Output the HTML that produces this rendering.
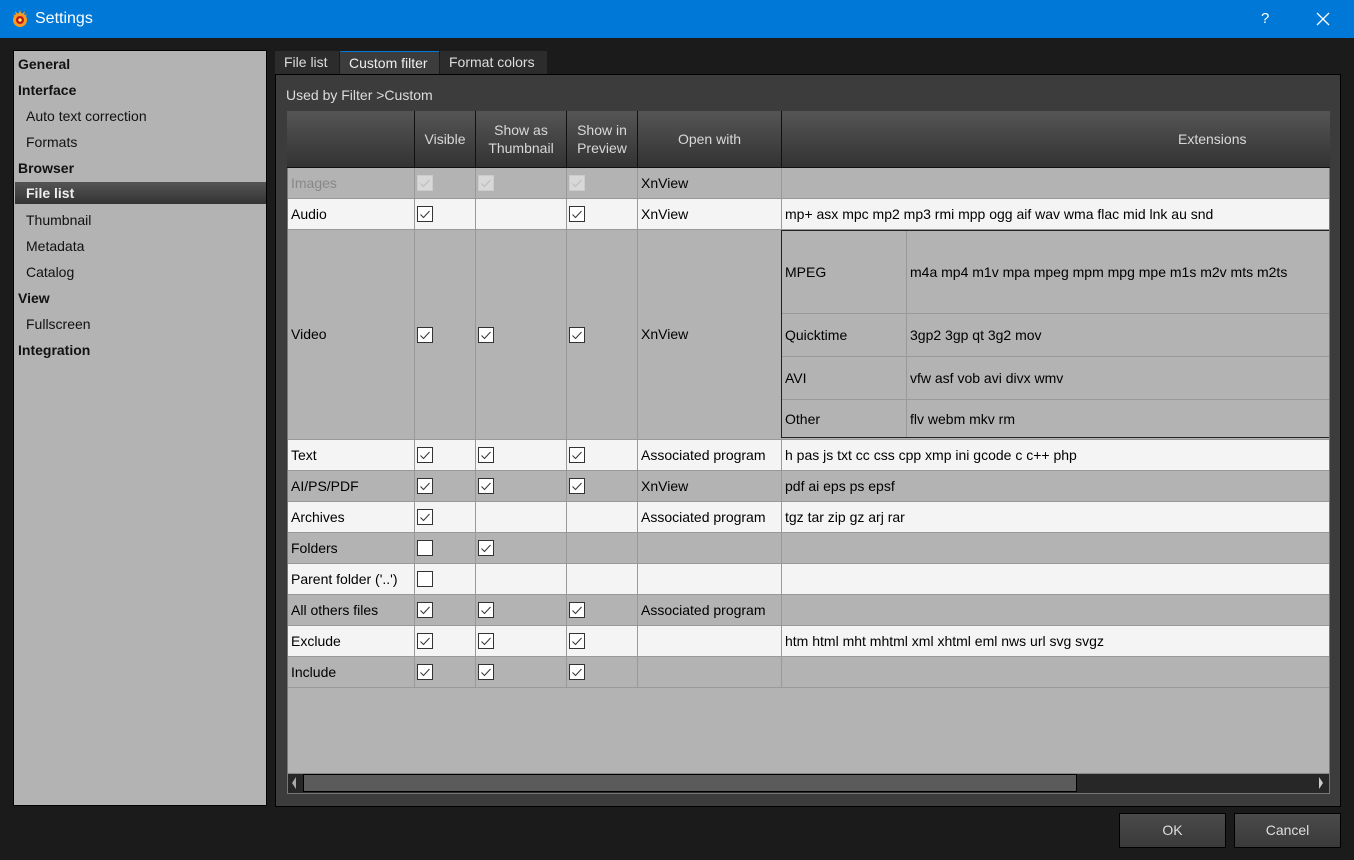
<!DOCTYPE html>
<html><head><meta charset="utf-8"><style>
*{margin:0;padding:0;box-sizing:border-box}
body{width:1354px;height:860px;background:#1b1b1b;font-family:"Liberation Sans",sans-serif;font-size:14px;position:relative;overflow:hidden;color:#000}
.a{position:absolute}
.title{left:0;top:0;width:1354px;height:38px;background:#0078d7;color:#fff;font-size:15px}
.nav{left:13px;top:50px;width:254px;height:756px;background:#b3b3b3;border:1px solid #000}
.nav div{position:absolute;left:4px;font-weight:bold;color:#111;height:22px;line-height:22px;width:248px}
.nav .s{padding-left:8px;font-weight:normal}
.tab{top:51px;height:23px;line-height:23px;color:#ddd;background:#2c2c2c;padding:0 9px;font-size:14px}
.panel{left:275px;top:74px;width:1066px;height:733px;background:#3c3c3c;border:1px solid #000}
.grid{left:287px;top:111px;width:1043px;height:683px;background:#b3b3b3;border:1px solid #777}
.hdr{left:287px;top:111px;width:1043px;height:57px;background:linear-gradient(#555,#333);border-bottom:1px solid #111}
.hc{position:absolute;top:0;height:56px;border-left:1px solid #111;color:#d8d8d8;display:flex;align-items:center;justify-content:center;text-align:center;line-height:18px}
.row{position:absolute;left:288px;width:1041px;height:31px;border-bottom:1px solid #999}
.c{position:absolute;top:0;height:30px;line-height:30px;padding-left:3px;border-right:1px solid #999;white-space:nowrap}
.cb{position:absolute;top:8px;width:16px;height:16px;border:1px solid #333;background:#fff}
.cb svg{position:absolute;left:2px;top:3px}
.dis{border-color:#ccc;background:#d8d8d8}
.btn{top:813px;height:35px;background:linear-gradient(#4a4a4a,#3a3a3a);border:1px solid #000;color:#ddd;text-align:center;line-height:33px;font-size:14px}
</style></head><body>
<div class="a title">
 <svg class="a" style="left:10px;top:9px" width="20" height="20" viewBox="0 0 20 20"><g fill="#f59a23"><circle cx="10" cy="11" r="7"/><path d="M3 5l3 2-1 2zM17 5l-3 2 1 2zM10 1l1.5 4h-3zM5 2l3 3-2 1zM15 2l-3 3 2 1z"/></g><circle cx="10" cy="11" r="4" fill="#c0161b"/><circle cx="10" cy="11" r="1.6" fill="#ff6"/></svg>
 <div class="a" style="left:35px;top:10px;font-size:16px">Settings</div>
 <div class="a" style="left:1261px;top:10px;font-size:15px">?</div>
 <svg class="a" style="left:1316px;top:12px" width="14" height="14"><path d="M1 1L13 13M13 1L1 13" stroke="#fff" stroke-width="1.3"/></svg>
</div>
<div class="a nav">
 <div style="top:2px">General</div>
 <div style="top:28px">Interface</div>
 <div class="s" style="top:54px">Auto text correction</div>
 <div class="s" style="top:80px">Formats</div>
 <div style="top:106px">Browser</div>
 <div class="s" style="top:131px;background:linear-gradient(#555,#333);color:#eee;font-weight:bold;left:1px;padding-left:11px;width:251px">File list</div>
 <div class="s" style="top:158px">Thumbnail</div>
 <div class="s" style="top:184px">Metadata</div>
 <div class="s" style="top:210px">Catalog</div>
 <div style="top:236px">View</div>
 <div class="s" style="top:262px">Fullscreen</div>
 <div style="top:288px">Integration</div>
</div>
<div class="a panel"></div>
<div class="a tab" style="left:275px;width:64px">File list</div>
<div class="a tab" style="left:340px;width:99px;background:#3c3c3c;border-top:1px solid #0078d7;color:#eee">Custom filter</div>
<div class="a tab" style="left:440px;width:107px">Format colors</div>
<div class="a" style="left:286px;top:87px;color:#ddd">Used by Filter &gt;Custom</div>
<div class="a grid"></div>
<div class="a hdr">
 <div class="hc" style="left:127px;width:61px">Visible</div>
 <div class="hc" style="left:188px;width:91px">Show as<br>Thumbnail</div>
 <div class="hc" style="left:279px;width:71px">Show in<br>Preview</div>
 <div class="hc" style="left:350px;width:144px">Open with</div>
 <div class="hc" style="left:494px;width:547px;justify-content:flex-start;padding-left:396px">Extensions</div>
</div>
<div id="rows"></div>
<div class="a" style="left:288px;top:773px;width:1041px;height:20px;background:#272727;border-top:1px solid #888"></div>
<div class="a" style="left:303px;top:774px;width:774px;height:18px;background:#5b5b5b;border:1px solid #000"></div>
<svg class="a" style="left:290px;top:776px" width="8" height="14"><path d="M6 1L2 7L6 13Z" fill="#aaa"/></svg>
<svg class="a" style="left:1317px;top:776px" width="8" height="14"><path d="M2 1L6 7L2 13Z" fill="#ccc"/></svg>
<div class="a btn" style="left:1119px;width:107px">OK</div>
<div class="a btn" style="left:1234px;width:107px">Cancel</div>
<script>
var ck='<svg width="10" height="9"><path d="M0.5 4.5L3.5 7.5L9.5 1" stroke="#333" fill="none" stroke-width="1"/></svg>';
var ckd='<svg width="10" height="9"><path d="M0.5 4.5L3.5 7.5L9.5 1" stroke="#bbb" fill="none" stroke-width="1"/></svg>';
function box(x,s){if(s===0)return '';var d=s===2;return '<div class="cb'+(d?' dis':'')+'" style="left:'+x+'px">'+(s===1?ck:s===2?ckd:'')+'</div>'}
var rows=[
['Images',2,2,2,'XnView','',0,'#b3b3b3','#888'],
['Audio',1,0,1,'XnView','mp+ asx mpc mp2 mp3 rmi mpp ogg aif wav wma flac mid lnk au snd',1],
['Video',1,1,1,'XnView','',0],
['Text',1,1,1,'Associated program','h pas js txt cc css cpp xmp ini gcode c c++ php',1],
['AI/PS/PDF',1,1,1,'XnView','pdf ai eps ps epsf',0],
['Archives',1,0,0,'Associated program','tgz tar zip gz arj rar',1],
['Folders',3,1,0,'','',0],
["Parent folder ('..')",3,0,0,'','',1],
['All others files',1,1,1,'Associated program','',0],
['Exclude',1,1,1,'','htm html mht mhtml xml xhtml eml nws url svg svgz',1],
['Include',1,1,1,'','',0]];
var h='',y=168;
rows.forEach(function(r){
 var hh=r[0]=='Video'?210:31;
 var bg=r[6]?'#f4f4f4':'#b3b3b3';
 var col=r[8]||'#000';
 var lh=hh-1;
 h+='<div class="row" style="top:'+y+'px;height:'+hh+'px;background:'+bg+'">';
 h+='<div class="c" style="left:0;width:127px;height:'+lh+'px;line-height:'+lh+'px;color:'+col+'">'+r[0]+'</div>';
 h+='<div class="c" style="left:127px;width:61px;height:'+lh+'px"></div><div class="c" style="left:188px;width:91px;height:'+lh+'px"></div><div class="c" style="left:279px;width:71px;height:'+lh+'px"></div>';
 h+='<div class="c" style="left:350px;width:144px;height:'+lh+'px;line-height:'+lh+'px">'+r[4]+'</div>';
 h+='<div class="c" style="left:494px;width:547px;height:'+lh+'px;line-height:'+lh+'px;border:none">'+r[5]+'</div>';
 var t=(hh-16)/2|0;
 h+=box(129,r[1]===3?3:r[1]).replace('style="','style="top:'+t+'px;');
 h+=box(190,r[2]).replace('style="','style="top:'+t+'px;');
 h+=box(281,r[3]).replace('style="','style="top:'+t+'px;');
 h+='</div>';
 y+=hh;
});
h+='<div class="a" style="left:781px;top:230px;width:548px;height:208px;border:1px solid #222;border-right:none;background:#b3b3b3">';
var sub=[['MPEG','m4a mp4 m1v mpa mpeg mpm mpg mpe m1s m2v mts m2ts',83],['Quicktime','3gp2 3gp qt 3g2 mov',43],['AVI','vfw asf vob avi divx wmv',43],['Other','flv webm mkv rm',37]];
var sy=0;
sub.forEach(function(s,i){
 h+='<div class="a" style="left:0;top:'+sy+'px;width:547px;height:'+s[2]+'px;'+(i<3?'border-bottom:1px solid #999':'')+'">';
 h+='<div class="a" style="left:0;top:0;width:125px;height:100%;border-right:1px solid #999;padding-left:3px;display:flex;align-items:center">'+s[0]+'</div>';
 h+='<div class="a" style="left:128px;top:0;height:100%;display:flex;align-items:center">'+s[1]+'</div></div>';
 sy+=s[2];
});
h+='</div>';
document.getElementById('rows').innerHTML=h;
</script>
</body></html>
